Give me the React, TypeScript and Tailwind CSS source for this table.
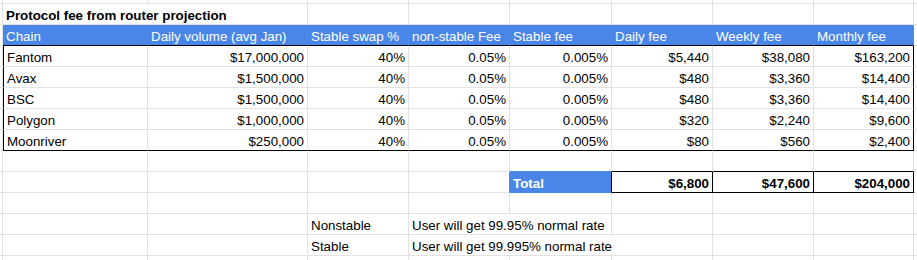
import type { ReactNode } from "react";

type CellProps = {
  children?: ReactNode;
  className?: string;
  right?: boolean;
};

function Cell({ children, className = "", right = false }: CellProps) {
  return (
    <div
      className={`flex h-[21px] items-end whitespace-nowrap border-r border-b border-[#e2e2e2] px-[3px] leading-[17px] ${
        right ? "justify-end" : "justify-start"
      } ${className}`}
    >
      {children}
    </div>
  );
}

function Gutter({ className = "" }: { className?: string }) {
  return <div className={`border-r border-b border-[#e2e2e2] ${className}`} />;
}

function Tail({ className = "" }: { className?: string }) {
  return <div className={`border-b border-[#e2e2e2] ${className}`} />;
}

const headers = [
  "Chain",
  "Daily volume (avg Jan)",
  "Stable swap %",
  "non-stable Fee",
  "Stable fee",
  "Daily fee",
  "Weekly fee",
  "Monthly fee",
];

const rows = [
  ["Fantom", "$17,000,000", "40%", "0.05%", "0.005%", "$5,440", "$38,080", "$163,200"],
  ["Avax", "$1,500,000", "40%", "0.05%", "0.005%", "$480", "$3,360", "$14,400"],
  ["BSC", "$1,500,000", "40%", "0.05%", "0.005%", "$480", "$3,360", "$14,400"],
  ["Polygon", "$1,000,000", "40%", "0.05%", "0.005%", "$320", "$2,240", "$9,600"],
  ["Moonriver", "$250,000", "40%", "0.05%", "0.005%", "$80", "$560", "$2,400"],
];

export default function App() {
  return (
    <div className="h-[260px] w-[917px] overflow-hidden bg-white font-['Liberation_Sans',Arial,sans-serif] text-[13.33px] text-black">
      <div className="grid grid-cols-[3px_145px_160px_101px_101px_102px_101px_101px_100px_1fr] grid-rows-[4px_repeat(12,21px)_4px]">
        {/* top strip */}
        <Gutter />
        {Array.from({ length: 8 }).map((_, i) => (
          <div key={i} className="border-r border-b border-[#e2e2e2]" />
        ))}
        <Tail />

        {/* title */}
        <Gutter />
        <Cell className="col-span-2 font-bold">Protocol fee from router projection</Cell>
        {Array.from({ length: 6 }).map((_, i) => (
          <Cell key={i} />
        ))}
        <Tail />

        {/* header */}
        <Gutter />
        {headers.map((h) => (
          <Cell
            key={h}
            className="border-r-[#5089e6] border-b-black bg-[#4a86e8] text-white"
          >
            {h}
          </Cell>
        ))}
        <Tail />

        {/* data */}
        {rows.map((r, ri) => {
          const last = ri === rows.length - 1;
          return [
            <Gutter key={`g${ri}`} />,
            ...r.map((v, ci) => (
              <Cell
                key={`${ri}-${ci}`}
                right={ci > 0}
                className={`${ci === 0 ? "border-l border-l-black" : ""} ${
                  ci === 7 ? "border-r-black" : ""
                } ${last ? "border-b-black" : ""}`}
              >
                {v}
              </Cell>
            )),
            <Tail key={`t${ri}`} />,
          ];
        })}

        {/* blank row */}
        <Gutter />
        <Cell />
        <Cell />
        <Cell />
        <Cell />
        <Cell className="border-b-[#4a86e8]" />
        <Cell className="border-b-black" />
        <Cell className="border-b-black" />
        <Cell className="border-b-black" />
        <Tail />

        {/* total */}
        <Gutter />
        <Cell />
        <Cell />
        <Cell />
        <Cell className="border-r-[#4a86e8]" />
        <Cell className="border-r-black border-b-[#4a86e8] bg-[#4a86e8] font-bold text-white">
          Total
        </Cell>
        <Cell right className="border-r-black border-b-black font-bold">
          $6,800
        </Cell>
        <Cell right className="border-r-black border-b-black font-bold">
          $47,600
        </Cell>
        <Cell right className="border-r-black border-b-black font-bold">
          $204,000
        </Cell>
        <Tail />

        {/* blank row */}
        <Gutter />
        {Array.from({ length: 8 }).map((_, i) => (
          <Cell key={i} />
        ))}
        <Tail />

        {/* nonstable */}
        <Gutter />
        <Cell />
        <Cell />
        <Cell>Nonstable</Cell>
        <Cell className="col-span-2">User will get 99.95% normal rate</Cell>
        <Cell />
        <Cell />
        <Cell />
        <Tail />

        {/* stable */}
        <Gutter />
        <Cell />
        <Cell />
        <Cell>Stable</Cell>
        <Cell className="col-span-3">User will get 99.995% normal rate</Cell>
        <Cell />
        <Cell />
        <Tail />

        {/* bottom strip */}
        <div className="border-r border-[#e2e2e2]" />
        {Array.from({ length: 8 }).map((_, i) => (
          <div key={i} className="border-r border-[#e2e2e2]" />
        ))}
        <div />
      </div>
    </div>
  );
}
